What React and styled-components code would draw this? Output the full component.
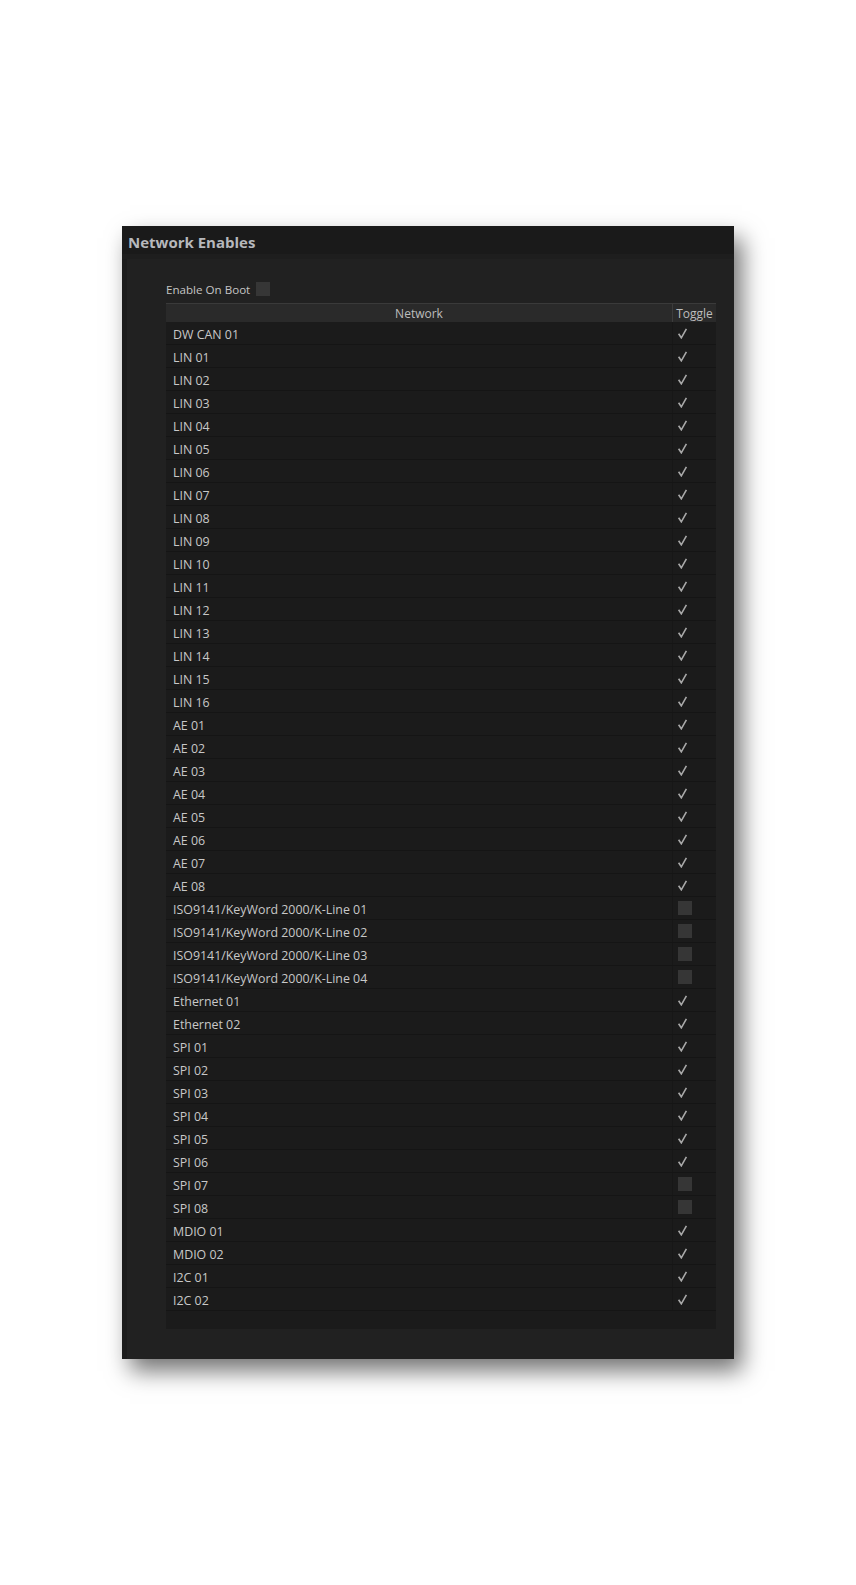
import React from 'react';
import styled, { createGlobalStyle } from 'styled-components';

const GlobalStyle = createGlobalStyle`
  html, body {
    margin: 0;
    background: #ffffff;
  }
  body {
    font-family: "Open Sans", "Noto Sans", sans-serif;
  }
`;

const Page = styled.div`
  padding: 226px 0 226px 122px;
`;

const Panel = styled.section`
  width: 612px;
  height: 1133px;
  background: #1c1c1c;
  box-shadow: 8px 12px 22px rgba(0, 0, 0, 0.55);
  display: flex;
  flex-direction: column;
`;

const TitleBar = styled.header`
  height: 28px;
  box-sizing: border-box;
  display: flex;
  align-items: center;
  padding: 3px 0 0 6px;
  background: #1a1a1a;
  color: #b6b8bc;
  font-weight: 700;
  font-size: 15px;
  border-bottom: 5px solid #1e1e1e;
  height: 33px;
`;

const Body = styled.div`
  flex: 1;
  margin-left: 5px;
  background: #212121;
  padding: 23px 18px 30px 39px;
  display: flex;
  flex-direction: column;
`;

const BootRow = styled.label`
  display: flex;
  align-items: center;
  gap: 6px;
  height: 14px;
  font-size: 11.6px;
  color: #c4c4c4;
  margin-bottom: 7px;
`;

const Box = styled.span`
  display: inline-block;
  width: 14px;
  height: 14px;
  background: #363636;
`;

const Table = styled.div`
  flex: 1;
  background: #1b1b1b;
  display: flex;
  flex-direction: column;
`;

const HeadRow = styled.div`
  display: grid;
  grid-template-columns: 1fr 44px;
  height: 19px;
  background: #2a2a2a;
  border-top: 1px solid #3a3a3a;
  box-sizing: border-box;
  font-size: 12px;
  color: #bdbdbd;
`;

const HeadCell = styled.div`
  display: flex;
  align-items: center;
  justify-content: center;
  border-left: ${(p) => (p.divider ? '1px solid #3c3c3c' : 'none')};
`;

const Row = styled.div`
  display: grid;
  grid-template-columns: 1fr 44px;
  height: 23px;
  box-sizing: border-box;
  border-bottom: 1px solid #151515;
  font-size: 12.4px;
  color: #c8c8c8;
`;

const NameCell = styled.div`
  display: flex;
  align-items: center;
  padding: 2px 0 0 7px;
`;

const ToggleCell = styled.div`
  display: flex;
  align-items: center;
  padding-left: 5px;
  border-left: 1px solid #171717;
`;

const CheckIcon = styled.svg`
  width: 11px;
  height: 11px;
  margin-left: -1px;
`;

function Check() {
  return (
    <CheckIcon viewBox="0 0 11 11">
      <path d="M1.6 5.8 L4.3 9.8 L9.4 0.8" fill="none" stroke="#a9a9a9" strokeWidth="1.6" strokeLinejoin="miter" />
    </CheckIcon>
  );
}

const pad = (n) => String(n).padStart(2, '0');

const rows = [
  ['DW CAN 01', true],
  ...Array.from({ length: 16 }, (_, i) => [`LIN ${pad(i + 1)}`, true]),
  ...Array.from({ length: 8 }, (_, i) => [`AE ${pad(i + 1)}`, true]),
  ...Array.from({ length: 4 }, (_, i) => [`ISO9141/KeyWord 2000/K-Line ${pad(i + 1)}`, false]),
  ['Ethernet 01', true],
  ['Ethernet 02', true],
  ...Array.from({ length: 8 }, (_, i) => [`SPI ${pad(i + 1)}`, i < 6]),
  ['MDIO 01', true],
  ['MDIO 02', true],
  ['I2C 01', true],
  ['I2C 02', true],
];

export default function App() {
  return (
    <Page>
      <GlobalStyle />
      <Panel>
        <TitleBar>Network Enables</TitleBar>
        <Body>
          <BootRow>
            Enable On Boot
            <Box />
          </BootRow>
          <Table>
            <HeadRow>
              <HeadCell>Network</HeadCell>
              <HeadCell divider>Toggle</HeadCell>
            </HeadRow>
            {rows.map(([name, on]) => (
              <Row key={name}>
                <NameCell>{name}</NameCell>
                <ToggleCell>{on ? <Check /> : <Box />}</ToggleCell>
              </Row>
            ))}
          </Table>
        </Body>
      </Panel>
    </Page>
  );
}
